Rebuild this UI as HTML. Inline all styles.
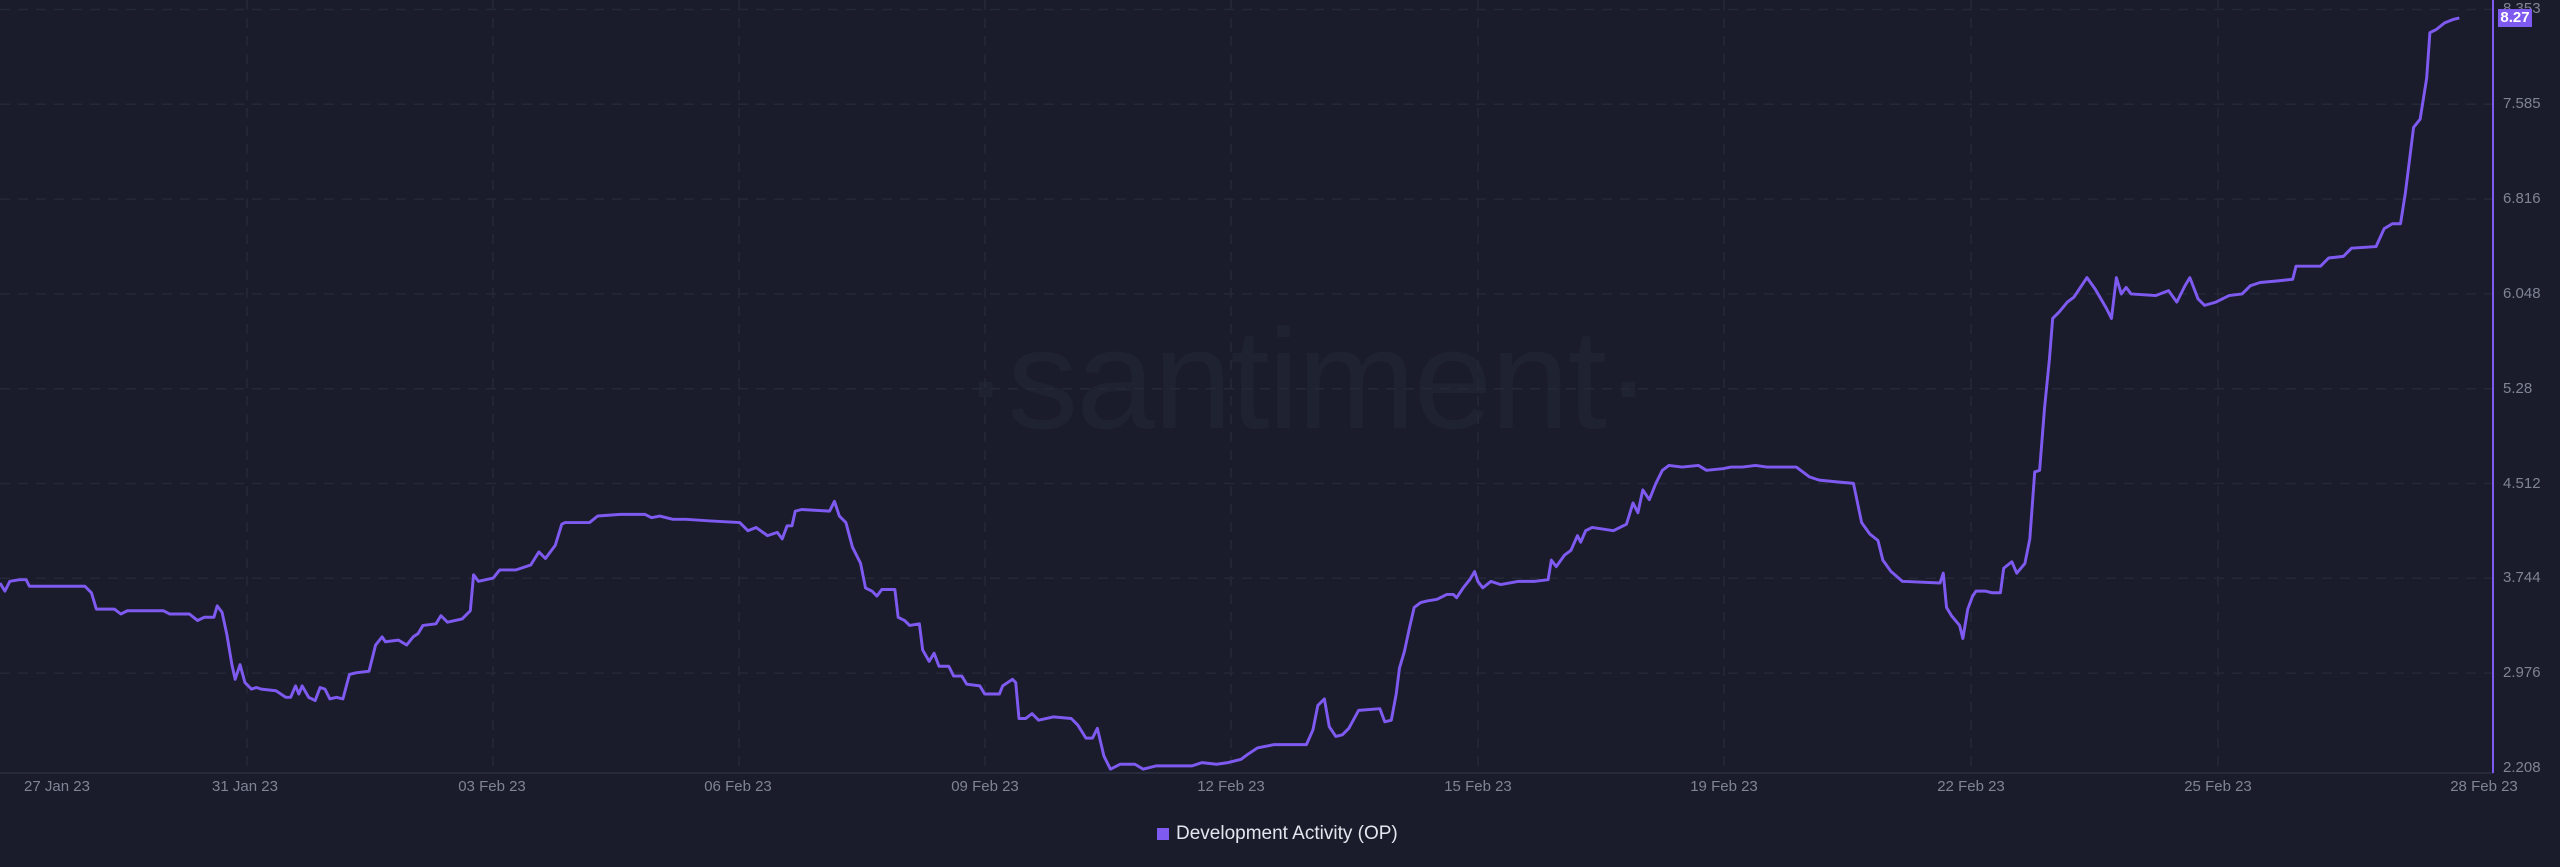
<!DOCTYPE html>
<html><head><meta charset="utf-8"><style>
html,body{margin:0;padding:0}
body{width:2560px;height:867px;background:#1a1c2c;position:relative;overflow:hidden;font-family:"Liberation Sans",sans-serif}
.yl{position:absolute;left:2503px;color:#7f8495;font-size:15px;line-height:16px}
.xl{position:absolute;top:778px;color:#7f8495;font-size:15px;transform:translateX(-50%);white-space:nowrap}
.wm{position:absolute;left:962px;top:305px;font-size:142px;color:#1f2231;letter-spacing:-2px;line-height:150px}
</style></head><body>
<div class="wm">·santiment·</div>
<svg width="2560" height="867" style="position:absolute;left:0;top:0">
<g stroke="#252837" stroke-width="1.5" stroke-dasharray="10,8">
<line x1="0" y1="9.5" x2="2493" y2="9.5"/><line x1="0" y1="104.3" x2="2493" y2="104.3"/>
<line x1="0" y1="199.1" x2="2493" y2="199.1"/><line x1="0" y1="293.9" x2="2493" y2="293.9"/>
<line x1="0" y1="388.7" x2="2493" y2="388.7"/><line x1="0" y1="483.5" x2="2493" y2="483.5"/>
<line x1="0" y1="578.3" x2="2493" y2="578.3"/><line x1="0" y1="673.1" x2="2493" y2="673.1"/>
<line x1="247" y1="0" x2="247" y2="773"/><line x1="493" y1="0" x2="493" y2="773"/>
<line x1="739" y1="0" x2="739" y2="773"/><line x1="985" y1="0" x2="985" y2="773"/>
<line x1="1231" y1="0" x2="1231" y2="773"/><line x1="1478" y1="0" x2="1478" y2="773"/>
<line x1="1724" y1="0" x2="1724" y2="773"/><line x1="1971" y1="0" x2="1971" y2="773"/>
<line x1="2218" y1="0" x2="2218" y2="773"/>
</g>
<line x1="0" y1="773" x2="2493" y2="773" stroke="#2b2e3f" stroke-width="1.5"/>
<line x1="2493" y1="0" x2="2493" y2="773" stroke="#7f5af0" stroke-width="2"/>
<g transform="scale(1.633)">
<polyline fill="none" stroke="#7f5af0" stroke-width="1.8" stroke-linejoin="round" points="0,357 3,362 6,356 12,355 16,355 18,359 52,359 56,363 59,373 70,373 74,376 78,374 100,374 104,376 116,376 121,380 125,378 131,378 133,371 136,375 139,389 142,407 144,416 147,407 150,418 154,422 157,421 160,422 169,423 175,427 178,427 181,420 183,425 185,420 189,427 193,429 196,421 199,422 202,428 206,427 210,428 214,413 218,412 226,411 230,395 234,390 236,393 244,392 249,395 253,390 256,388 259,383 267,382 270,377 274,381 283,379 288,374 290,352 293,356 302,354 306,349 316,349 325,346 330,338 334,342 340,334 344,321 346,320 361,320 366,316 380,315 395,315 399,317 404,316 412,318 420,318 435,319 453,320 458,325 463,323 470,328 476,326 479,330 482,322 485,322 487,313 491,312 508,313 511,307 514,316 518,320 522,335 527,345 530,360 534,362 537,365 540,361 548,361 550,378 554,380 557,383 563,382 565,398 569,405 572,400 575,408 581,408 584,414 589,414 592,419 600,420 603,425 612,425 614,420 620,416 622,418 624,440 628,440 632,437 636,441 645,439 656,440 660,444 665,452 669,452 672,446 676,463 680,471 686,468 695,468 700,471 708,469 730,469 736,467 745,468 752,467 760,465 764,462 770,458 775,457 780,456 800,456 804,447 807,432 811,428 814,445 818,451 822,450 826,446 832,435 845,434 848,442 852,441 855,425 857,409 860,399 863,385 866,372 870,369 874,368 880,367 886,364 890,364 892,366 896,360 900,355 903,350 905,356 908,360 913,356 919,358 930,356 940,356 948,355 950,343 953,347 958,340 962,337 966,328 968,332 971,325 975,323 988,325 996,321 1000,308 1003,314 1006,300 1010,306 1014,296 1018,288 1022,285 1030,286 1040,285 1045,288 1055,287 1060,286 1067,286 1075,285 1082,286 1100,286 1108,292 1114,294 1124,295 1135,296 1140,320 1145,327 1150,331 1153,343 1158,350 1165,356 1188,357 1190,351 1192,372 1195,377 1200,383 1202,391 1205,373 1208,365 1210,362 1216,362 1220,363 1225,363 1227,348 1232,344 1235,351 1240,345 1243,330 1246,289 1249,288 1252,250 1255,220 1257,195 1261,191 1266,185 1270,182 1278,170 1283,177 1290,189 1293,195 1296,170 1299,180 1302,176 1305,180 1320,181 1328,178 1333,185 1338,175 1341,170 1346,183 1350,187 1357,185 1365,181 1373,180 1378,175 1384,173 1395,172 1404,171 1406,163 1421,163 1426,158 1435,157 1440,152 1455,151 1460,140 1465,137 1470,137 1473,118 1478,78 1482,73 1486,48 1488,20 1492,18 1497,14 1502,12 1506,11"/>
</g>
</svg>
<div class="yl" style="top:1px">8.353</div>
<div class="yl" style="top:96px">7.585</div>
<div class="yl" style="top:191px">6.816</div>
<div class="yl" style="top:286px">6.048</div>
<div class="yl" style="top:381px">5.28</div>
<div class="yl" style="top:476px">4.512</div>
<div class="yl" style="top:570px">3.744</div>
<div class="yl" style="top:665px">2.976</div>
<div class="yl" style="top:760px">2.208</div>
<div style="position:absolute;left:2498px;top:9px;width:34px;height:18px;background:#7f5af0;color:#fff;font-size:15px;line-height:18px;text-align:center;font-weight:bold">8.27</div>
<div class="xl" style="left:57px">27 Jan 23</div>
<div class="xl" style="left:245px">31 Jan 23</div>
<div class="xl" style="left:492px">03 Feb 23</div>
<div class="xl" style="left:738px">06 Feb 23</div>
<div class="xl" style="left:985px">09 Feb 23</div>
<div class="xl" style="left:1231px">12 Feb 23</div>
<div class="xl" style="left:1478px">15 Feb 23</div>
<div class="xl" style="left:1724px">19 Feb 23</div>
<div class="xl" style="left:1971px">22 Feb 23</div>
<div class="xl" style="left:2218px">25 Feb 23</div>
<div class="xl" style="left:2484px">28 Feb 23</div>
<div style="position:absolute;left:1157px;top:828px;width:12px;height:12px;background:#7f5af0"></div>
<div style="position:absolute;left:1176px;top:822px;color:#e4e6ee;font-size:19px;line-height:24px;white-space:nowrap">Development Activity (OP)</div>
</body></html>
